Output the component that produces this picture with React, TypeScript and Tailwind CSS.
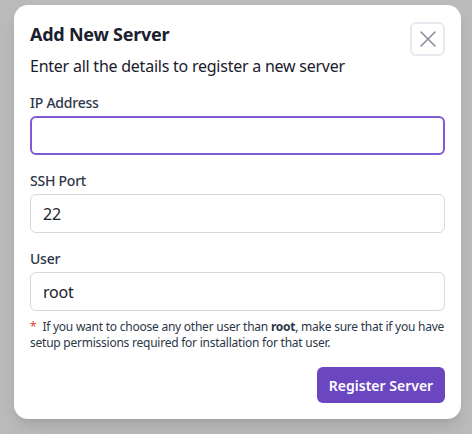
import { X } from "lucide-react";

function Field({
  label,
  value,
  focused = false,
}: {
  label: string;
  value?: string;
  focused?: boolean;
}) {
  return (
    <div className="flex flex-col">
      <label className="mb-[3px] text-[14px] font-medium leading-[20px] text-[#2d3748]">
        {label}
      </label>
      <div
        className={
          focused
            ? "flex h-[39px] items-center rounded-md border-2 border-[#805ad5] px-[11px] text-[16px] text-[#1a202c]"
            : "flex h-[39px] items-center rounded-md border border-[#d5d8e0] px-3 text-[16px] text-[#1a202c]"
        }
      >
        {value}
      </div>
    </div>
  );
}

export default function App() {
  return (
    <div
      className="h-[434px] w-[472px] overflow-hidden bg-[#bababa] pt-[5px] pl-[14px] tracking-[-0.015em]"
      style={{ fontFamily: '"Noto Sans", sans-serif' }}
    >
      <div className="w-[447px] rounded-[14px] bg-white px-4 pb-[16px] pt-[17px] shadow-lg">
        <div className="flex items-start justify-between">
          <div>
            <h2 className="text-[18px] font-bold leading-[24px] text-[#1a202c]">
              Add New Server
            </h2>
            <p className="mt-[8px] text-[16px] leading-[24px] text-[#1a202c]">
              Enter all the details to register a new server
            </p>
          </div>
          <button
            type="button"
            className="flex h-[34px] w-[35px] items-center justify-center rounded-md border-2 border-[#e8e9ee] text-[#8a8f9c]"
          >
            <X size={28} strokeWidth={1.3} />
          </button>
        </div>

        <div className="mt-[15px] flex flex-col gap-[16px]">
          <Field label="IP Address" focused />
          <Field label="SSH Port" value="22" />
          <Field label="User" value="root" />
        </div>

        <p className="mt-[8px] text-[12px] leading-[16px] tracking-[-0.02em] text-[#2d3748]">
          <span className="mr-[6px] text-[#e53e3e]">*</span>
          If you want to choose any other user than{" "}
          <span className="font-bold">root</span>, make sure that if you have
          setup permissions required for installation for that user.
        </p>

        <div className="mt-[16px] flex justify-end">
          <button
            type="button"
            className="h-[36px] w-[128px] rounded-md bg-[#6b46c1] text-center text-[14px] font-semibold tracking-normal text-white"
          >
            Register Server
          </button>
        </div>
      </div>
    </div>
  );
}
